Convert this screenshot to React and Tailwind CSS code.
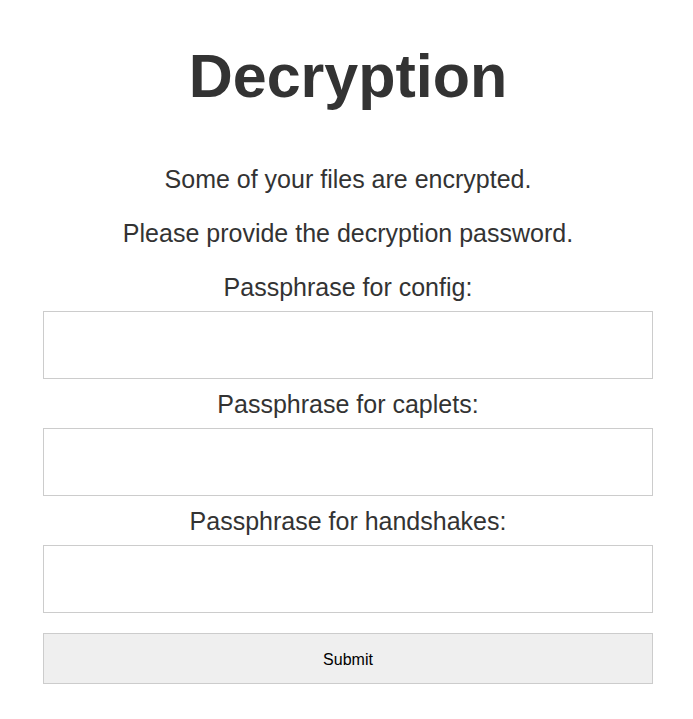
const fields = ['config', 'caplets', 'handshakes'];

const App = () => {
  return (
    <div className="min-h-screen bg-white text-[#333] font-['Liberation_Sans',Arial,sans-serif]">
      <div className="ml-[43px] w-[610px] text-center">
        <h1 className="pt-[40px] text-[61px] leading-[72px] font-bold">Decryption</h1>

        <p className="mt-[53px] text-[25px] leading-[28px]">Some of your files are encrypted.</p>
        <p className="mt-[26px] text-[25px] leading-[28px]">Please provide the decryption password.</p>

        <form onSubmit={(e) => e.preventDefault()}>
          {fields.map((name, i) => (
            <div key={name}>
              <label
                htmlFor={name}
                className={`block text-[25px] leading-[28px] ${i === 0 ? 'mt-[26px]' : 'mt-[11px]'}`}
              >
                Passphrase for {name}:
              </label>
              <input
                id={name}
                type="password"
                className="mt-[10px] block h-[68px] w-full border border-[#ccc] bg-white px-3 outline-none"
              />
            </div>
          ))}

          <button
            type="submit"
            className="mt-[20px] block h-[51px] w-full border border-[#ccc] bg-[#efefef] pt-[3px] text-[16px] text-black"
          >
            Submit
          </button>
        </form>
      </div>
    </div>
  );
};

export default App;
